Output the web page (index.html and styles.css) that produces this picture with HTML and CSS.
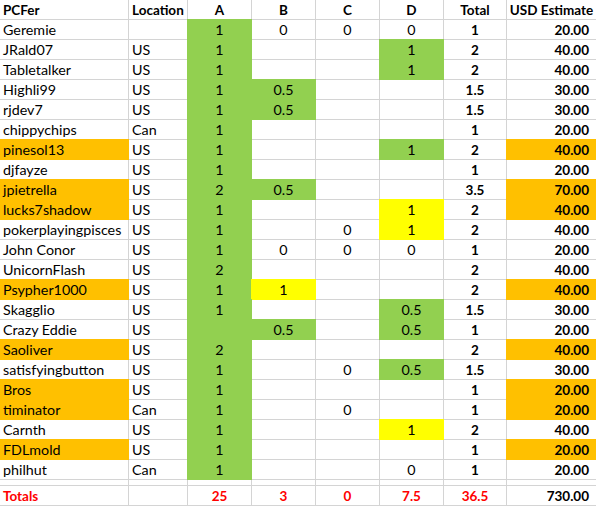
FILE: index.html
```html
<!DOCTYPE html>
<html>
<head>
<meta charset="utf-8">
<link rel="stylesheet" href="styles.css">
</head>
<body>
<div class="sheet">
  <div class="c hd l">PCFer</div><div class="c hd l">Location</div><div class="c hd">A</div><div class="c hd">B</div><div class="c hd">C</div><div class="c hd">D</div><div class="c hd">Total</div><div class="c hd">USD Estimate</div>

  <div class="c l">Geremie</div><div class="c l"></div><div class="c g">1</div><div class="c">0</div><div class="c">0</div><div class="c">0</div><div class="c b">1</div><div class="c b r">20.00</div>
  <div class="c l">JRald07</div><div class="c l">US</div><div class="c g">1</div><div class="c"></div><div class="c"></div><div class="c g">1</div><div class="c b">2</div><div class="c b r">40.00</div>
  <div class="c l">Tabletalker</div><div class="c l">US</div><div class="c g">1</div><div class="c"></div><div class="c"></div><div class="c g">1</div><div class="c b">2</div><div class="c b r">40.00</div>
  <div class="c l">Highli99</div><div class="c l">US</div><div class="c g">1</div><div class="c g">0.5</div><div class="c"></div><div class="c"></div><div class="c b">1.5</div><div class="c b r">30.00</div>
  <div class="c l">rjdev7</div><div class="c l">US</div><div class="c g">1</div><div class="c g">0.5</div><div class="c"></div><div class="c"></div><div class="c b">1.5</div><div class="c b r">30.00</div>
  <div class="c l">chippychips</div><div class="c l">Can</div><div class="c g">1</div><div class="c"></div><div class="c"></div><div class="c"></div><div class="c b">1</div><div class="c b r">20.00</div>
  <div class="c l o">pinesol13</div><div class="c l">US</div><div class="c g">1</div><div class="c"></div><div class="c"></div><div class="c g">1</div><div class="c b">2</div><div class="c b r o">40.00</div>
  <div class="c l">djfayze</div><div class="c l">US</div><div class="c g">1</div><div class="c"></div><div class="c"></div><div class="c"></div><div class="c b">1</div><div class="c b r">20.00</div>
  <div class="c l o">jpietrella</div><div class="c l">US</div><div class="c g">2</div><div class="c g">0.5</div><div class="c"></div><div class="c"></div><div class="c b">3.5</div><div class="c b r o">70.00</div>
  <div class="c l o">lucks7shadow</div><div class="c l">US</div><div class="c g">1</div><div class="c"></div><div class="c"></div><div class="c y">1</div><div class="c b">2</div><div class="c b r o">40.00</div>
  <div class="c l">pokerplayingpisces</div><div class="c l">US</div><div class="c g">1</div><div class="c"></div><div class="c">0</div><div class="c y">1</div><div class="c b">2</div><div class="c b r">40.00</div>
  <div class="c l">John Conor</div><div class="c l">US</div><div class="c g">1</div><div class="c">0</div><div class="c">0</div><div class="c">0</div><div class="c b">1</div><div class="c b r">20.00</div>
  <div class="c l">UnicornFlash</div><div class="c l">US</div><div class="c g">2</div><div class="c"></div><div class="c"></div><div class="c"></div><div class="c b">2</div><div class="c b r">40.00</div>
  <div class="c l o">Psypher1000</div><div class="c l">US</div><div class="c g">1</div><div class="c y">1</div><div class="c"></div><div class="c"></div><div class="c b">2</div><div class="c b r o">40.00</div>
  <div class="c l">Skagglio</div><div class="c l">US</div><div class="c g">1</div><div class="c"></div><div class="c"></div><div class="c g">0.5</div><div class="c b">1.5</div><div class="c b r">30.00</div>
  <div class="c l">Crazy Eddie</div><div class="c l">US</div><div class="c g"></div><div class="c g">0.5</div><div class="c"></div><div class="c g">0.5</div><div class="c b">1</div><div class="c b r">20.00</div>
  <div class="c l o">Saoliver</div><div class="c l">US</div><div class="c g">2</div><div class="c"></div><div class="c"></div><div class="c"></div><div class="c b">2</div><div class="c b r o">40.00</div>
  <div class="c l">satisfyingbutton</div><div class="c l">US</div><div class="c g">1</div><div class="c"></div><div class="c">0</div><div class="c g">0.5</div><div class="c b">1.5</div><div class="c b r">30.00</div>
  <div class="c l o">Bros</div><div class="c l">US</div><div class="c g">1</div><div class="c"></div><div class="c"></div><div class="c"></div><div class="c b">1</div><div class="c b r o">20.00</div>
  <div class="c l o">timinator</div><div class="c l">Can</div><div class="c g">1</div><div class="c"></div><div class="c">0</div><div class="c"></div><div class="c b">1</div><div class="c b r o">20.00</div>
  <div class="c l">Carnth</div><div class="c l">US</div><div class="c g">1</div><div class="c"></div><div class="c"></div><div class="c y">1</div><div class="c b">2</div><div class="c b r">40.00</div>
  <div class="c l o">FDLmold</div><div class="c l">US</div><div class="c g">1</div><div class="c"></div><div class="c"></div><div class="c"></div><div class="c b">1</div><div class="c b r o">20.00</div>
  <div class="c l">philhut</div><div class="c l">Can</div><div class="c g">1</div><div class="c"></div><div class="c"></div><div class="c">0</div><div class="c b">1</div><div class="c b r">20.00</div>

  <div class="c"></div><div class="c"></div><div class="c"></div><div class="c"></div><div class="c"></div><div class="c"></div><div class="c"></div><div class="c"></div>

  <div class="c l b red">Totals</div><div class="c"></div><div class="c b red">25</div><div class="c b red">3</div><div class="c b red">0</div><div class="c b red">7.5</div><div class="c b red">36.5</div><div class="c b r">730.00</div>
</div>
</body>
</html>
```

FILE: styles.css
```css
html, body {
  margin: 0;
  padding: 0;
  background: #ffffff;
}

.sheet {
  display: grid;
  grid-template-columns: 128px 58px 63px 63px 63px 63px 62px 89px;
  grid-template-rows: repeat(24, 19px) 5px 19px;
  gap: 1px;
  padding-bottom: 1px;
  width: 596px;
  background: #d4d4d4;
  font-family: Lato, "Open Sans", sans-serif;
  font-size: 14.3px;
  color: #000;
}

.c {
  background: #ffffff;
  line-height: 20px;
  text-align: center;
  white-space: nowrap;
  overflow: visible;
}

.hd, .b { font-weight: bold; font-size: 13.5px; }
.l { text-align: left; padding-left: 3px; }
.r { text-align: right; padding-right: 7px; }
.red { color: #ff0000; }

.g { background: #92d050; box-shadow: 0 0 0 1px #92d050; }
.o { background: #ffc000; box-shadow: 0 0 0 1px #ffc000; }
.y { background: #ffff00; box-shadow: 0 0 0 1px #ffff00; }
```
